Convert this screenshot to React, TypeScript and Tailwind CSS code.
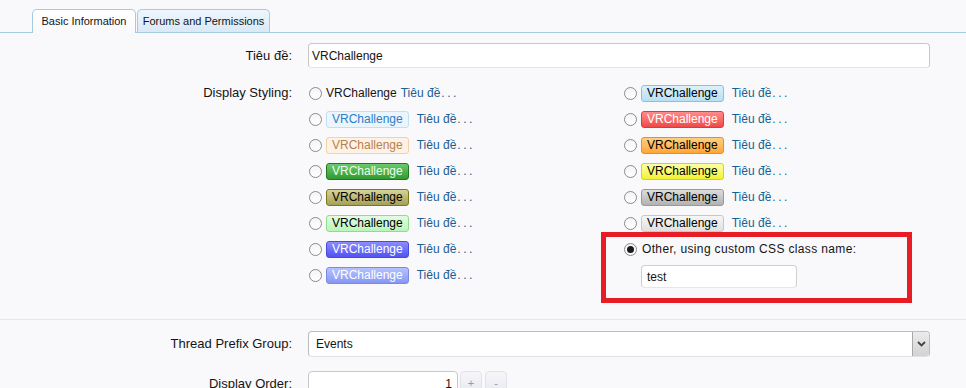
const leftStyles = [
  "",
  "bg-[#eaf5fd] border-[#c3dff4] text-[#2f7fc1]",
  "bg-[#fdf2e5] border-[#f3d2a6] text-[#b8814a]",
  "bg-gradient-to-b from-[#6cc86c] to-[#2f9a2f] border-[#1f7a1f] text-[#eaffea]",
  "bg-gradient-to-b from-[#d6d39a] to-[#a4a054] border-[#7a771f] text-black",
  "bg-gradient-to-b from-[#e2fde2] to-[#b9f5b9] border-[#8fdc8f] text-black",
  "bg-gradient-to-b from-[#8c8cff] to-[#5252f2] border-[#4a4ad8] text-white",
  "bg-gradient-to-b from-[#b4c2ff] to-[#8797f2] border-[#7a8ae2] text-white",
];

const rightStyles = [
  "bg-gradient-to-b from-[#dcf1fc] to-[#b8dff5] border-[#83c3e6] text-black",
  "bg-gradient-to-b from-[#ff8a8a] to-[#ef4848] border-[#dd3a3a] text-white",
  "bg-gradient-to-b from-[#ffd080] to-[#ffa534] border-[#e39028] text-black",
  "bg-gradient-to-b from-[#ffffa0] to-[#f2f226] border-[#d6d600] text-black",
  "bg-gradient-to-b from-[#dcdcdc] to-[#b2b2b2] border-[#9a9a9a] text-black",
  "bg-gradient-to-b from-[#f6f6f6] to-[#e0e0e0] border-[#c8c8c8] text-black",
];

function Radio({ checked = false }: { checked?: boolean }) {
  return (
    <span className="ml-[1px] flex h-[13px] w-[13px] shrink-0 items-center justify-center rounded-full border border-[#8a8a8a] bg-gradient-to-b from-[#f4f4f4] to-white">
      {checked && <span className="h-[7px] w-[7px] rounded-full bg-[#1a1a1a]" />}
    </span>
  );
}

function Title() {
  return (
    <span className="text-[#176093]">
      Tiêu đề<span className="ml-[1px] tracking-[2.5px]">...</span>
    </span>
  );
}

function Option({ style }: { style: string }) {
  return (
    <div className="flex h-[26px] items-center">
      <Radio />
      {style ? (
        <>
          <span
            className={`ml-[4px] mr-[8px] h-[17px] rounded-[3px] border px-[5px] leading-[15px] ${style}`}
          >
            VRChallenge
          </span>
          <Title />
        </>
      ) : (
        <>
          <span className="ml-[4px] mr-[4px]">VRChallenge</span>
          <Title />
        </>
      )}
    </div>
  );
}

export default function App() {
  return (
    <div className="min-h-screen bg-[#f9f9fc] font-['Liberation_Sans',Arial,sans-serif] text-[12px] text-[#141414]">
      <div className="flex gap-[1px] border-b border-[#a5cae4] pl-[32px] pt-[9px] text-[11px]">
        <div className="-mb-[1px] h-[24px] w-[104px] rounded-t-[5px] border border-b-0 border-[#a5cae4] bg-gradient-to-b from-white to-[#f9f9fc] text-center leading-[23px]">
          Basic Information
        </div>
        <div className="h-[23px] w-[133px] rounded-t-[5px] border border-b-0 border-[#a5cae4] bg-gradient-to-b from-[#eef6fc] to-[#d9e9f6] text-center leading-[22px]">
          Forums and Permissions
        </div>
      </div>

      <div className="grid grid-cols-[292px_622px] gap-x-[16px] pt-[10px]">
        <div className="flex h-[25px] items-center justify-end text-[13px]">Tiêu đề:</div>
        <div className="flex h-[25px] items-center rounded-[4px] border border-[#c8c8c8] border-b-[#e4e4e4] bg-white px-[3px]">
          VRChallenge
        </div>

        <div className="mt-[12px] text-right text-[13px] leading-[26px]">Display Styling:</div>
        <div className="mt-[12px] grid grid-cols-[314px_308px]">
          <div>
            {leftStyles.map((s, i) => (
              <Option key={i} style={s} />
            ))}
          </div>
          <div className="pl-[1px]">
            {rightStyles.map((s, i) => (
              <Option key={i} style={s} />
            ))}
            <div className="relative">
              <div className="flex h-[26px] items-center">
                <Radio checked />
                <span className="ml-[5px] tracking-[0.35px]">Other, using custom CSS class name:</span>
              </div>
              <div className="ml-[18px] mt-[3px] flex h-[23px] w-[156px] items-center rounded-[4px] border border-[#cfcfcf] border-b-[#e6e6e6] bg-white px-[5px]">
                test
              </div>
              <div className="absolute left-[-22px] top-[-4px] h-[71px] w-[311px] border-[5px] border-[#e81c24]" />
            </div>
          </div>
        </div>
      </div>

      <div className="mt-[31px] border-t border-[#dce9f5]" />

      <div className="grid grid-cols-[292px_622px] gap-x-[16px] pt-[11px]">
        <div className="flex h-[26px] items-center justify-end text-[13px]">Thread Prefix Group:</div>
        <div className="flex h-[26px] items-center rounded-[4px] border border-[#bdbdbd] border-b-[#e2e2e2] bg-white">
          <span className="flex-1 px-[7px]">Events</span>
          <span className="flex h-full w-[17px] items-center justify-center rounded-r-[3px] border-l border-[#a8a8a8] bg-gradient-to-b from-[#ececec] to-[#d2d2d2]">
            <svg width="9" height="6" viewBox="0 0 9 6">
              <path d="M1 1 L4.5 4.5 L8 1" fill="none" stroke="#444" strokeWidth="1.8" />
            </svg>
          </span>
        </div>

        <div className="mt-[14px] flex h-[25px] items-center justify-end text-[13px]">Display Order:</div>
        <div className="mt-[14px] flex items-start gap-[2px]">
          <div className="flex h-[25px] w-[150px] items-center justify-end rounded-[4px] border border-[#c8c8c8] bg-white px-[5px]">
            1
          </div>
          <span className="flex h-[24px] w-[22px] items-center justify-center rounded-[4px] border border-[#e2e2ea] bg-gradient-to-b from-[#f6f6fa] to-[#e8e8f0] text-[11px] text-[#999]">
            +
          </span>
          <span className="ml-[1px] flex h-[24px] w-[22px] items-center justify-center rounded-[4px] border border-[#e2e2ea] bg-gradient-to-b from-[#f6f6fa] to-[#e8e8f0] text-[11px] text-[#999]">
            -
          </span>
        </div>
      </div>
    </div>
  );
}
